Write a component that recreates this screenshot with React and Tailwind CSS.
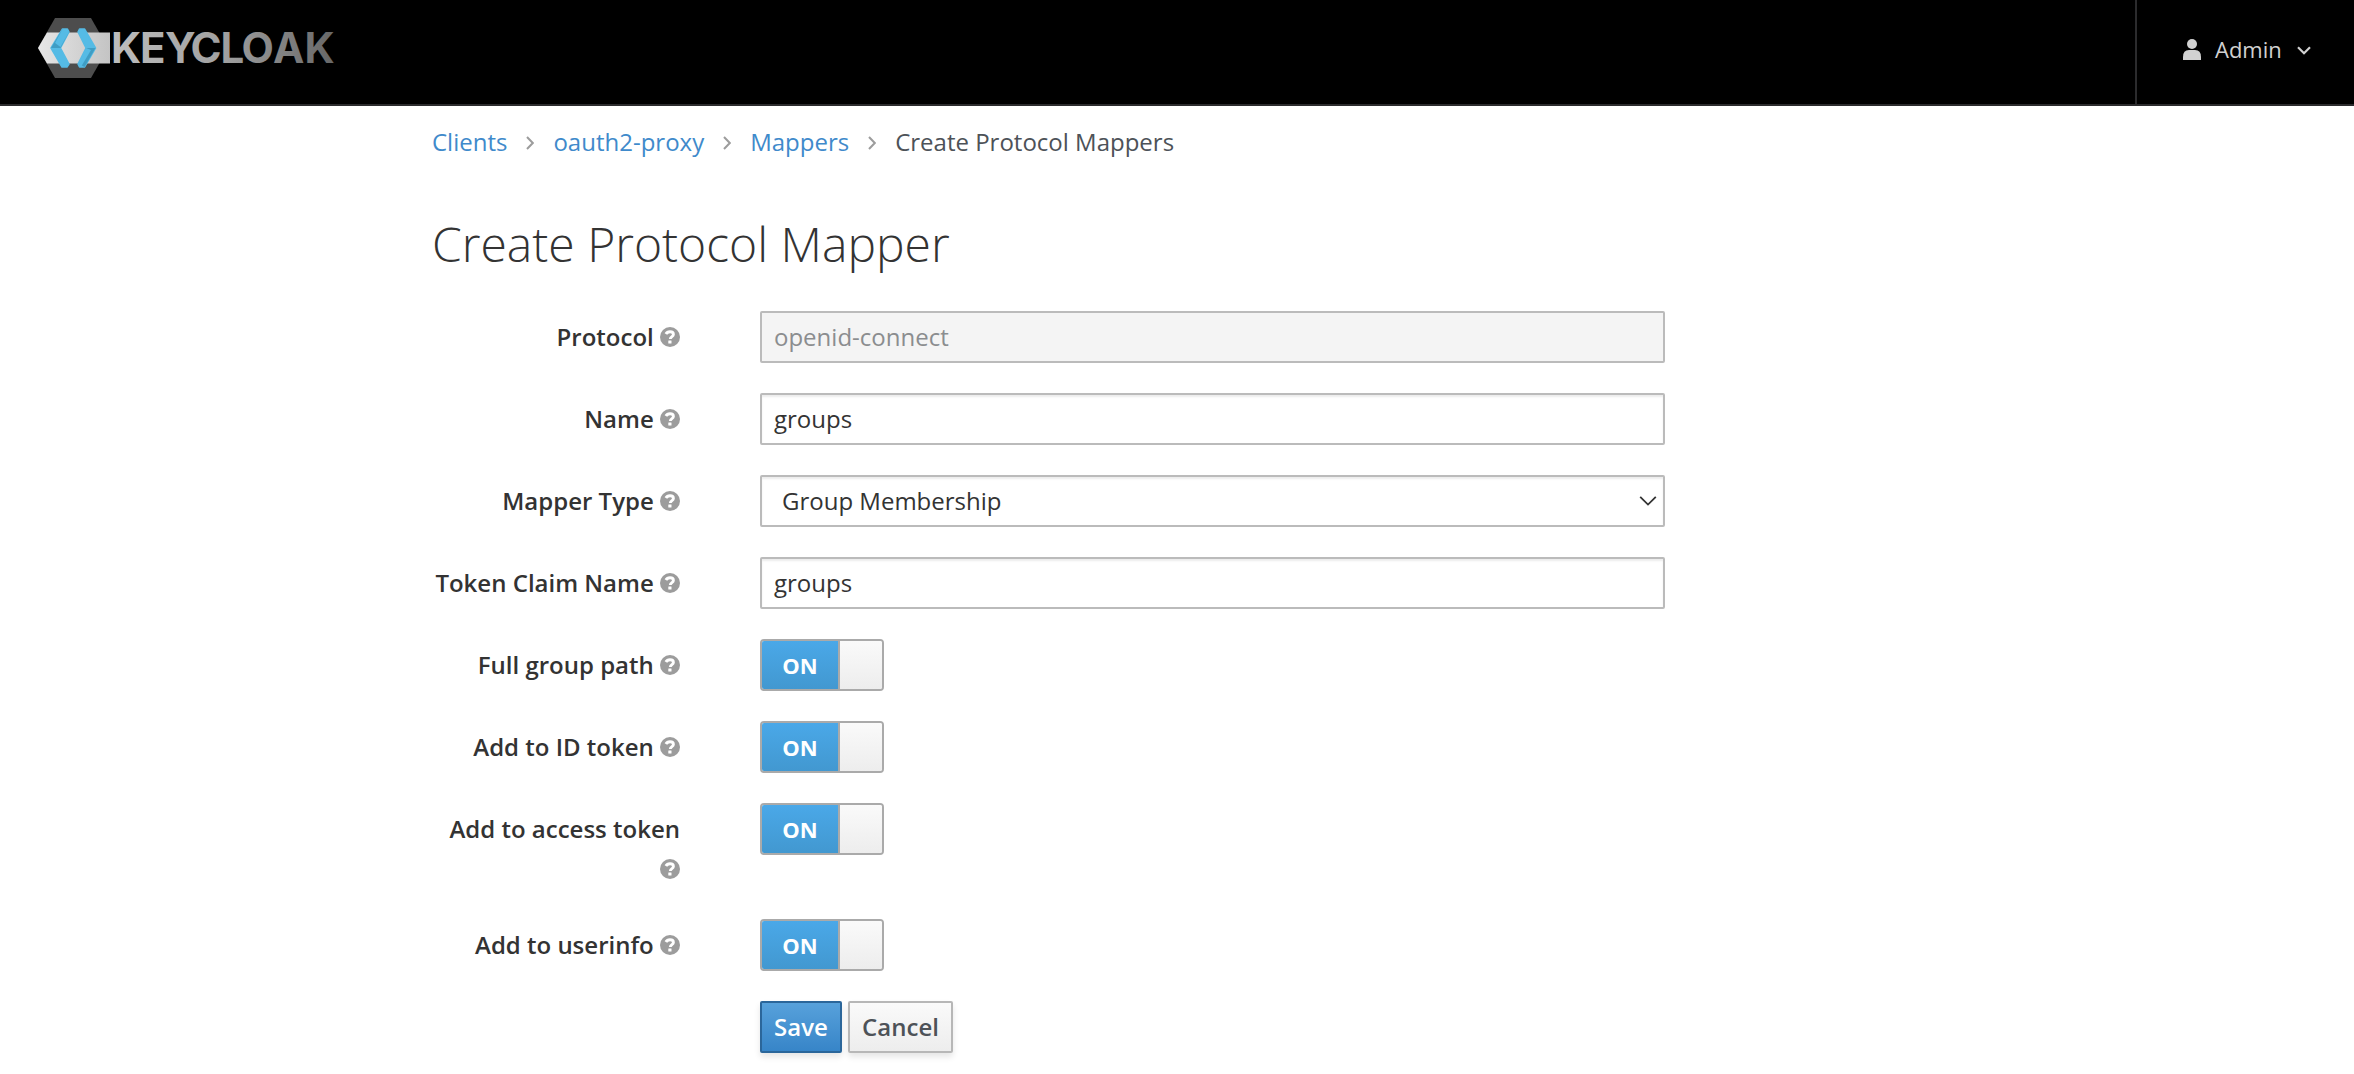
import React from "react";

const Help = () => (
  <svg viewBox="0 0 20 20" className="inline-block h-5 w-5 align-[-1px]" role="img">
    <circle cx="10" cy="10" r="10" fill="#9c9c9c" />
    <path d="M5.9 7C6.8 5.200 8.2 4.700 10 4.700c2.200 0 3.400 1.200 3.400 2.700 0 2.200-3.100 2.200-3.100 4.600" fill="none" stroke="#fff" strokeWidth="2.900" />
    <rect x="8.300" y="13.400" width="3.200" height="3.200" rx=".4" fill="#fff" />
  </svg>
);

const Row = ({ label, children, tall }) => (
  <div className={tall ? "flex h-[116px]" : "flex h-[82px]"}>
    <div className="mr-20 w-[248px] pt-1.5 text-right text-[24px] leading-10 font-semibold text-[#333]">
      {label} <Help />
    </div>
    <div>{children}</div>
  </div>
);

const box =
  "flex h-[52px] w-[905px] items-center rounded-[2px] border-2 border-[#bbb] pl-3 text-[24px]";

const Field = ({ value, disabled }) => (
  <div
    className={
      disabled
        ? `${box} bg-[#f4f4f4] text-[#8b8d8f]`
        : `${box} bg-white text-[#333] shadow-[inset_0_2px_2px_rgba(3,3,3,0.075)]`
    }
  >
    {value}
  </div>
);

const Select = ({ value }) => (
  <div className={`${box} justify-between bg-white pr-1.5 text-[#333] shadow-[inset_0_2px_2px_rgba(3,3,3,0.075)]`}>
    <span className="pl-2">{value}</span>
    <svg viewBox="0 0 18 12" className="h-3 w-[18px]" fill="none" stroke="#333" strokeWidth="1.800">
      <path d="M1.200 1.800 9 9.600 16.800 1.800" />
    </svg>
  </div>
);

const Toggle = () => (
  <div className="flex h-[52px] w-[124px] overflow-hidden rounded-[4px] border-2 border-[#aaa]">
    <div className="flex w-[76px] items-center justify-center bg-linear-to-b from-[#4aa8e8] to-[#4298d0] text-[22px] font-bold text-white">
      ON
    </div>
    <div className="flex-1 border-l-2 border-[#aaa] bg-linear-to-b from-[#fafafa] to-[#ededed]" />
  </div>
);

const Crumb = ({ children }) => (
  <>
    <span className="text-[#3f8acb]">{children}</span>
    <svg viewBox="0 0 8 14" className="mt-0.5 h-3.5 w-2" fill="none" stroke="#9c9c9c" strokeWidth="2">
      <path d="M1 1 6.800 7 1 13" />
    </svg>
  </>
);

const Logo = () => (
  <svg viewBox="0 0 310 64" className="h-16 w-[310px]">
    <defs>
      <linearGradient id="band" x1="0" x2="1">
        <stop offset="0" stopColor="#e6e6e6" />
        <stop offset="1" stopColor="#c4c4c4" />
      </linearGradient>
      <linearGradient id="word" gradientUnits="userSpaceOnUse" x1="75" x2="298" y1="0" y2="0">
        <stop offset="0" stopColor="#bdbdbd" />
        <stop offset=".5" stopColor="#a0a0a0" />
        <stop offset="1" stopColor="#666" />
      </linearGradient>
    </defs>
    <path d="M17 2H53L70 32 53 62H17L0 32Z" fill="#4d4d4d" />
    <path d="M9 16.500H72V47.500H9L0 32Z" fill="url(#band)" />
    <g strokeLinejoin="round" strokeWidth="1.500">
      <path d="M24.500 13H29.500L31 16 22.500 32 31 48 29 51H24L13 32Z" fill="#55bbe5" stroke="#55bbe5" />
      <path d="M24.500 13 13 32H22.500L31 16Z" fill="#3f9dc4" />
      <path d="M24.500 13H29.500L31 16 22.500 31 17 27Z" fill="#55bbe5" />
      <path d="M41.500 13H46.500L57.500 32 46.500 51H41.500L40 48 48 32 40 16Z" fill="#55bbe5" stroke="#55bbe5" />
      <path d="M48 32H57.500L46.500 51 43 49Z" fill="#3f9dc4" />
      <path d="M48 32 53 34 43.500 50 40 48Z" fill="#55bbe5" />
    </g>
    <text x="73 102 127 152.500 182.500 203.500 235 266.500" y="47.300" fill="url(#word)" className="font-['Inter'] text-[42px] font-bold">
      KEYCLOAK
    </text>
  </svg>
);

export default function App() {
  return (
    <div className="min-h-[1074px] bg-white font-['Open_Sans',sans-serif] text-[24px]">
      <header className="flex h-[106px] justify-between border-b-2 border-[#2b2b2d] bg-black">
        <div className="pt-4 pl-[38px]">
          <Logo />
        </div>
        <div className="flex w-[219px] border-l-2 border-[#2b2b2d] pt-[33px] pl-[46px] text-[22px] leading-[33px] text-[#d1d1d1]">
          <svg viewBox="0 0 18 21" className="mt-1.5 h-[21px] w-[18px]" fill="#d1d1d1">
            <circle cx="9" cy="5" r="5" />
            <path d="M0 21V18Q0 11 6 11H12Q18 11 18 18V21Z" />
          </svg>
          <span className="ml-3.5">Admin</span>
          <svg viewBox="0 0 14 10" className="mt-3 ml-[15px] h-2.5 w-3.5" fill="none" stroke="#d1d1d1" strokeWidth="2.200">
            <path d="M1 2.200 7 8.200 13 2.200" />
          </svg>
        </div>
      </header>
      <main className="pl-[432px]">
        <nav className="flex h-[72px] items-center gap-[19px] text-[24px] text-[#4d5258]">
          <Crumb>Clients</Crumb>
          <Crumb>oauth2-proxy</Crumb>
          <Crumb>Mappers</Crumb>
          <span>Create Protocol Mappers</span>
        </nav>
        <h1 className="h-[133px] pt-[34px] text-[48px] leading-[64px] font-light text-[#333]">
          Create Protocol Mapper
        </h1>
        <form>
          <Row label="Protocol"><Field value="openid-connect" disabled /></Row>
          <Row label="Name"><Field value="groups" /></Row>
          <Row label="Mapper Type"><Select value="Group Membership" /></Row>
          <Row label="Token Claim Name"><Field value="groups" /></Row>
          <Row label="Full group path"><Toggle /></Row>
          <Row label="Add to ID token"><Toggle /></Row>
          <Row label="Add to access token" tall><Toggle /></Row>
          <Row label="Add to userinfo"><Toggle /></Row>
          <div className="ml-[328px] flex gap-1.5 text-[24px] font-semibold">
            <button type="button" className="h-[52px] w-[82px] rounded-[2px] border-2 border-[#2b669a] bg-linear-to-b from-[#57a1db] to-[#3785c8] text-white shadow-[0_4px_6px_rgba(3,3,3,0.1)]">
              Save
            </button>
            <button type="button" className="h-[52px] w-[105px] rounded-[2px] border-2 border-[#b7b7b7] bg-linear-to-b from-[#fafafa] to-[#ededed] text-[#4d5258] shadow-[0_4px_6px_rgba(3,3,3,0.1)]">
              Cancel
            </button>
          </div>
        </form>
      </main>
    </div>
  );
}
